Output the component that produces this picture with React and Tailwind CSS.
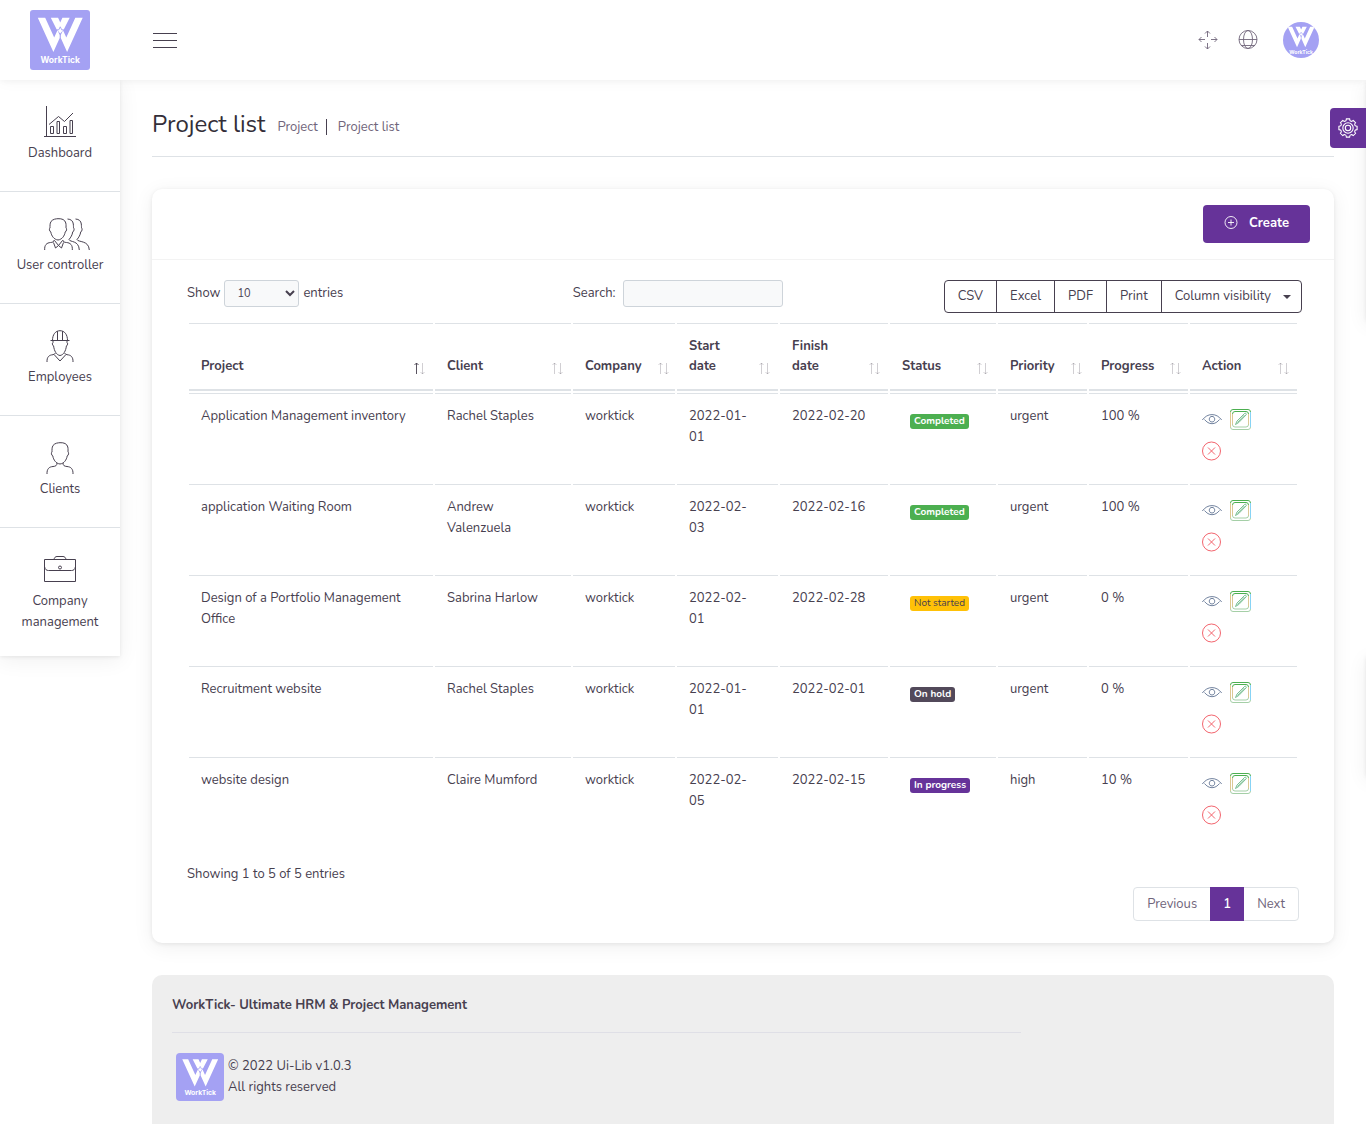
import React from "react";

function Logo({ className }) {
  return (
    <svg viewBox="0 0 60 60" className={className} role="img" aria-label="WorkTick">
      <rect width="60" height="60" fill="#a4a1f3" />
      <g fill="#fff">
        <path d="M7.800 7.800h7.400l9 19.700 3.300-7.300 2.200 4.800v3L23.400 42z" />
        <path d="M52.700 7.800h-7.400l-9 19.700-3.300-7.300-2.200 4.800v3L37.100 42z" />
        <path d="M20.800 7.800h7.300l2.150 4.600 2.150-4.600h7.300l-5.800 11.400-3.650 4.300-3.650-4.300z" />
      </g>
      <path d="M26.800 19.800h2l1.450-3 1.450 3h2" fill="none" stroke="#a4a1f3" strokeWidth=".9" />
      <text x="30.250" y="52.500" textAnchor="middle" fill="#fff" fontSize="8.500" fontWeight="700" fontFamily="Inter, sans-serif">
        WorkTick
      </text>
    </svg>
  );
}

function Icon({ children, className = "h-8 w-8", box = "0 0 32 32", width = 1 }) {
  return (
    <svg viewBox={box} className={className} fill="none" stroke="currentColor" strokeWidth={width} aria-hidden="true">
      {children}
    </svg>
  );
}

const DashboardIcon = () => (
  <Icon>
    <path d="M2.500 0v30.500M0 30.500h32" />
    <path d="M5 18.500l9.500-8 6 5L29 7" />
    <path d="M6.500 20.500h3v7h-3zM13 15.500h2.500v12H13zM19.500 20.500h3v7h-3zM26 14.500h2.500v13H26z" />
  </Icon>
);

const Head = () => (
  <path d="M9 3.500C11 1 14 .800 16 .700c4-.2 7 1 7.800 4.300.4 2 .2 4 .2 5 1 .5.800 3-.8 4-.7 4-3.200 7.500-7.200 8-4-.5-6.500-4-7.200-8-1.600-1-1.800-3.500-.8-4 0-2-.2-4.500 1-6.500z" />
);

const UsersIcon = () => (
  <Icon className="h-8 w-[46px]" box="0 0 46 32">
    <g transform="translate(-2 0)">
      <Head />
    </g>
    <path d="M.7 32c-.4-5 2-7.200 5.800-7.500 2-.1 3.300-.6 3.800-2.500M28.300 32c.4-5-2-7.200-5.800-7.500-2-.1-3.300-.6-3.800-2.500" />
    <path d="M9.500 24.500l2 5.500 3-2.500 3 2.500 2-5.500M10.500 22.500l4 5 4-5" />
    <path d="M23.500 1c3.500.2 5.500 2 5.800 5 .2 2 .2 3 .2 4 1 .5.800 3-.8 4-.4 3-2 5.500-3.700 7.500 1 3 9.800.5 10.300 10.500" />
    <path d="M31.500 1c3.500.2 5.500 2 5.800 5 .2 2 .2 3 .2 4 1 .5.800 3-.8 4-.4 3-2 5.500-3.700 7.500 1 3 11.800.5 12.300 10.500" />
  </Icon>
);

const Shoulders = () => (
  <path d="M3 32c-.2-5 2-7.200 6-7.500 2.500-.2 4-.8 4-3.500M29 32c.2-5-2-7.200-6-7.500-2.500-.2-4-.8-4-3.500" />
);

const EmployeesIcon = () => (
  <Icon>
    <path d="M6.500 10.500h19M8.500 10.500c0-6 3-9.800 7.500-9.800s7.500 3.800 7.500 9.800M13.500 10.500V1.200M18.500 10.500V1.200" />
    <path d="M9 10.500v2c-1 .5-.8 2.500.6 3.500.6 5 2.900 9 6.400 9.500 3.500-.5 5.800-4.500 6.400-9.500 1.400-1 1.600-3 .6-3.500v-2" />
    <path d="M3 32c-.2-5 2-7 6-7.300l2.500-1.200M29 32c.2-5-2-7-6-7.300l-2.500-1.200M10.500 25l5.500 6 5.500-6" />
  </Icon>
);

const ClientsIcon = () => (
  <Icon>
    <Head />
    <Shoulders />
  </Icon>
);

const CompanyIcon = () => (
  <Icon>
    <path d="M.5 5.500h31v22H.5zM.5 12.500c.5 3 2 4 4 4h23c2 0 3.500-1 4-4" />
    <path d="M10 5.500c.3-2 1.500-3 3-3h6c1.500 0 2.700 1 3 3" />
    <circle cx="16" cy="13.500" r="1.500" />
  </Icon>
);

function MoveIcon() {
  return (
    <Icon className="h-5 w-5" box="0 0 20 20" width={0.9}>
      <path d="M9.500 1v6M9.500 13v6M1 9.500h6M13 9.500h6" />
      <path d="M7 3.500L9.500 1 12 3.500M7 16.500L9.500 19l2.500-2.500M3.500 7L1 9.500 3.500 12M16.500 7L19 9.500 16.500 12" />
    </Icon>
  );
}

function GlobeIcon() {
  return (
    <Icon className="h-5 w-5" box="0 0 20 20" width={0.9}>
      <circle cx="10" cy="9.500" r="9" />
      <ellipse cx="10" cy="9.500" rx="4.500" ry="9" />
      <path d="M1 9.500h18M3 15.500h14" />
    </Icon>
  );
}

function GearIcon() {
  const teeth = [0, 45, 90, 135, 180, 225, 270, 315];
  return (
    <Icon className="h-5 w-5" box="0 0 20 20" width={1.1}>
      {teeth.map((a) => (
        <path key={a} transform={`rotate(${a} 10 10)`} d="M7.200 3.200C8 3 8.300 2.200 8.400.900h3.200c.1 1.300.4 2.100 1.200 2.300" />
      ))}
      <circle cx="10" cy="10" r="5.200" />
      <circle cx="10" cy="10" r="2.700" />
    </Icon>
  );
}

const nav = [
  { label: "Dashboard", icon: DashboardIcon },
  { label: "User controller", icon: UsersIcon, shift: true },
  { label: "Employees", icon: EmployeesIcon },
  { label: "Clients", icon: ClientsIcon },
  { label: "Company management", icon: CompanyIcon },
];

const columns = [
  { label: "Project", width: "w-[244px]", sorted: true },
  { label: "Client", width: "w-[136px]" },
  { label: "Company", width: "w-[102px]" },
  { label: "Start date", width: "w-[101px]" },
  { label: "Finish date", width: "w-[108px]" },
  { label: "Status", width: "w-[106px]" },
  { label: "Priority", width: "w-[89px]" },
  { label: "Progress", width: "w-[99px]" },
  { label: "Action", width: "w-[107px]" },
];

const badge = {
  Completed: "bg-[#4caf50] font-bold text-white",
  "Not started": "bg-[#ffc107] text-[#47404f]",
  "On hold": "bg-[#52495a] font-bold text-white",
  "In progress": "bg-[#663399] font-bold text-white",
};

const rows = [
  ["Application Management inventory", "Rachel Staples", "2022-01-", "01", "2022-02-20", "Completed", "urgent", "100 %"],
  ["application Waiting Room", "Andrew Valenzuela", "2022-02-", "03", "2022-02-16", "Completed", "urgent", "100 %"],
  ["Design of a Portfolio Management Office", "Sabrina Harlow", "2022-02-", "01", "2022-02-28", "Not started", "urgent", "0 %"],
  ["Recruitment website", "Rachel Staples", "2022-01-", "01", "2022-02-01", "On hold", "urgent", "0 %"],
  ["website design", "Claire Mumford", "2022-02-", "05", "2022-02-15", "In progress", "high", "10 %"],
];

function SortArrows({ sorted }) {
  return (
    <svg viewBox="0 0 14 14" className="mb-px h-3.5 w-3.5 shrink-0" fill="none" stroke="#47404f" aria-hidden="true">
      <path d="M4.500 13V2M2.500 4l2-2 2 2" opacity={sorted ? 0.9 : 0.25} />
      <path d="M10.500 2v11M8.500 11l2 2 2-2" opacity="0.25" />
    </svg>
  );
}

function Actions() {
  return (
    <div className="flex w-16 flex-wrap gap-x-2">
      <a href="#view" aria-label="View" className="flex h-8 items-center pb-1.5 text-[#4d6285]">
        <Icon className="h-5 w-5" box="0 0 20 20" width={0.8}>
          <path d="M.3 11C3 7.500 6 5.600 10 5.600s7 1.900 9.700 5.400M2.500 10.500C4.500 13 7 14.700 10 14.700s5.500-1.700 7.500-4.200" />
          <path d="M10 7.400c1.800 0 2.700 1.300 2.700 2.800S11.800 13 10 13s-2.700-1.300-2.700-2.800S8.200 7.400 10 7.400z" />
        </Icon>
      </a>
      <a href="#edit" aria-label="Edit" className="flex h-8 items-center pb-1.5">
        <svg viewBox="0 0 21 21" className="h-[21px] w-[21px]" fill="none" aria-hidden="true">
          <path d="M.5 18V3M2.500 16V5M18.500 5v11" stroke="#dcc894" />
          <path d="M20.500 3v15" stroke="#87d3f5" />
          <path d="M.5 3Q.5.500 3 .500h15q2.500 0 2.500 2.500M2.500 5q0-2.500 2.500-2.500h11q2.500 0 2.500 2.500" stroke="#4caf50" />
          <path d="M.5 18q0 2.500 2.500 2.500h15q2.500 0 2.500-2.500M2.500 15.500q0 2.500 2.500 2.500h11q2.500 0 2.500-2.500" stroke="#a5cfa7" />
          <path d="M5.500 15.500l1.500-3.500 7.500-7.500c1-1 2.500.5 1.500 1.500L8.800 13.500zM7.500 13.500l7-7.500" stroke="#5cb07a" strokeWidth=".8" />
        </svg>
      </a>
      <a href="#delete" aria-label="Delete" className="flex h-8 items-center pb-1.5 text-[#f0525c]">
        <Icon className="h-5 w-5" box="0 0 20 20" width={0.9}>
          <circle cx="9.500" cy="10" r="9" />
          <path d="M6 6.500l7 7M13 6.500l-7 7" />
        </Icon>
      </a>
    </div>
  );
}

const cell = "border-t border-[#dee2e6] p-3 align-top";
const panelShadow = "shadow-[0_4px_20px_1px_rgba(0,0,0,0.06),0_1px_4px_rgba(0,0,0,0.08)]";

export default function App() {
  return (
    <div className="relative flex min-h-screen flex-col overflow-hidden bg-white font-['Nunito','Open_Sans',sans-serif] text-[13px] leading-[21px] text-[#47404f]">
      <header className="relative z-10 flex h-20 items-center bg-white pr-[47px] shadow-[0_1px_15px_rgba(0,0,0,0.04),0_1px_6px_rgba(0,0,0,0.04)]">
        <a href="#home" className="flex w-[120px] justify-center">
          <Logo className="h-15 w-15 rounded-[3px]" />
        </a>
        <button aria-label="Toggle menu" className="ml-[33px] flex w-6 flex-col gap-1.5 pt-px">
          <span className="h-px w-full bg-[#47404f]" />
          <span className="h-px w-full bg-[#47404f]" />
          <span className="h-px w-full bg-[#47404f]" />
        </button>
        <div className="ml-auto flex items-center text-[#70657b]">
          <button aria-label="Full screen" className="mr-5"><MoveIcon /></button>
          <button aria-label="Language" className="mr-[25px]"><GlobeIcon /></button>
          <button aria-label="Account"><Logo className="h-9 w-9 rounded-full" /></button>
        </div>
      </header>

      <div className="flex flex-1">
        <nav className={`w-[120px] shrink-0 self-start bg-white ${panelShadow}`}>
          {nav.map(({ label, icon: NavIcon, shift }) => (
            <a
              key={label}
              href="#nav"
              className="flex flex-col items-center gap-[5px] border-b border-[#dee2e6] pt-[26px] pb-[27px] text-center last:border-b-0 last:pb-[23px]"
            >
              <span className={shift ? "pl-3.5" : ""}><NavIcon /></span>
              <span className="px-2">{label}</span>
            </a>
          ))}
        </nav>

        <main className="flex min-w-0 flex-1 flex-col px-8 pt-7">
          <div className="flex items-center border-b border-[#dee2e6] pb-3.5">
            <h1 className="pb-0.5 text-2xl leading-8 font-normal text-[#332e38]">Project list</h1>
            <ul className="flex items-center pt-1 text-[#70657b]">
              <li className="pr-2 pl-3 leading-4"><a href="#project">Project</a></li>
              <li className="border-l border-[#47404f] pl-[11px] leading-4">Project list</li>
            </ul>
          </div>

          <section className={`mt-8 rounded-[10px] bg-white ${panelShadow}`}>
            <div className="flex justify-end border-b border-[#f3f3f3] px-6 py-4">
              <button className="flex h-[38px] items-center gap-[11px] rounded bg-[#663399] px-[21px] pb-0.5 font-bold text-white">
                <Icon className="h-3.5 w-3.5" box="0 0 14 14" width={0.9}>
                  <circle cx="7" cy="6.500" r="6" />
                  <path d="M7 3.500v6M4 6.500h6" />
                </Icon>
                Create
              </button>
            </div>

            <div className="pt-5 pb-[22px] pl-[35px]">
              <div className="grid grid-cols-[34.6%_1fr_auto] items-start pr-8">
                <label className="flex h-[27px] items-center gap-1">
                  Show
                  <select defaultValue="10" className="h-[27px] w-[75px] rounded-[3px] border border-[#ced4da] bg-[#f8f9fa] px-2 text-[11px]">
                    <option>10</option>
                    <option>25</option>
                    <option>50</option>
                  </select>
                  entries
                </label>
                <label className="flex h-[27px] items-center gap-[7px]">
                  Search:
                  <input type="search" className="h-[27px] w-40 rounded-[3px] border border-[#ced4da] bg-[#f8f9fa] px-2" />
                </label>
                <div className="flex h-[33px] divide-x divide-[#47404f] rounded border border-[#47404f]">
                  {["CSV", "Excel", "PDF", "Print"].map((b) => (
                    <button key={b} className="px-[13px]">{b}</button>
                  ))}
                  <button className="flex items-center gap-3 pr-2.5 pl-[13px]">
                    Column visibility
                    <span className="border-x-4 border-t-4 border-x-transparent border-t-[#47404f]" />
                  </button>
                </div>
              </div>

              <div className="pt-2 pr-[35px]">
                <table className="w-full table-fixed border-separate border-spacing-0.5">
                  <thead>
                    <tr>
                      {columns.map((c) => (
                        <th
                          key={c.label}
                          className={`${c.width} border-t border-b-2 border-[#dee2e6] pt-3 pr-[7px] pb-[13px] pl-3 text-left align-bottom leading-5 font-bold`}
                        >
                          <div className="flex items-end justify-between gap-3.5">
                            <span>{c.label}</span>
                            <SortArrows sorted={c.sorted} />
                          </div>
                        </th>
                      ))}
                    </tr>
                  </thead>
                  <tbody>
                    {rows.map(([project, client, start, startDay, finish, status, priority, progress]) => (
                      <tr key={project}>
                        <td className={cell}>{project}</td>
                        <td className={cell}>{client}</td>
                        <td className={cell}>worktick</td>
                        <td className={cell}>{start}<br />{startDay}</td>
                        <td className={`${cell} whitespace-nowrap`}>{finish}</td>
                        <td className={cell}>
                          <span className={`m-2 block w-fit rounded-[3px] px-1 text-[10px] leading-[15px] whitespace-nowrap ${badge[status]}`}>{status}</span>
                        </td>
                        <td className={cell}>{priority}</td>
                        <td className={cell}>{progress}</td>
                        <td className={cell}><Actions /></td>
                      </tr>
                    ))}
                  </tbody>
                </table>
              </div>

              <p className="pt-4">Showing 1 to 5 of 5 entries</p>
              <div className="flex justify-end pt-0.5 pr-[35px]">
                <div className="flex h-[34px] rounded border border-[#dee2e6] text-[#70657b]">
                  <button className="px-[13px]">Previous</button>
                  <button className="-my-px w-[34px] bg-[#663399] font-semibold text-white">1</button>
                  <button className="px-[13px]">Next</button>
                </div>
              </div>
            </div>
          </section>

          <footer className="mt-8 flex-1 rounded-t-[10px] bg-[#eee] pt-5 pr-[30px] pl-5">
            <div className="w-3/4 border-b border-[#dfdfe6] pb-4">
              <strong className="font-bold">WorkTick- Ultimate HRM &amp; Project Management</strong>
            </div>
            <div className="flex items-center gap-1 pt-5 pl-1">
              <Logo className="h-12 w-12 rounded-sm" />
              <div>
                <p>© 2022 Ui-Lib v1.0.3</p>
                <p>All rights reserved</p>
              </div>
            </div>
          </footer>
        </main>
      </div>

      <div className="absolute top-20 left-full h-60 w-10 shadow-[0_4px_20px_1px_rgba(0,0,0,0.06),0_1px_4px_rgba(0,0,0,0.08)]" />
      <div className="absolute top-[656px] left-full h-[120px] w-10 shadow-[0_4px_20px_1px_rgba(0,0,0,0.06),0_1px_4px_rgba(0,0,0,0.08)]" />
      <button aria-label="Customize" className="absolute top-[108px] right-0 flex h-10 w-9 items-center justify-center rounded-l bg-[#663399] text-white">
        <GearIcon />
      </button>
    </div>
  );
}
